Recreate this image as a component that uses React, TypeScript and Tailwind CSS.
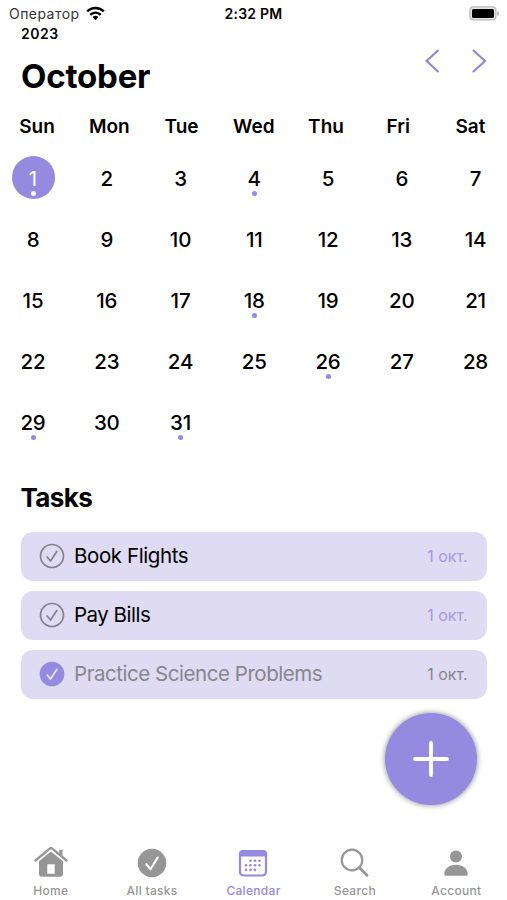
import React, { useState } from 'react';

interface Task {
  id: number;
  title: string;
  date: string;
  done: boolean;
  titleClass: string;
}

interface NavItem {
  name: string;
  icon: React.ReactNode;
}

const WEEKDAYS = ['Sun', 'Mon', 'Tue', 'Wed', 'Thu', 'Fri', 'Sat'];
const DAYS = Array.from({ length: 31 }, (_, i) => i + 1);
const DAYS_WITH_TASKS = [1, 4, 18, 26, 29, 31];

const INITIAL_TASKS: Task[] = [
  { id: 1, title: 'Book Flights', date: '1 окт.', done: false, titleClass: 'tracking-[-0.4px]' },
  { id: 2, title: 'Pay Bills', date: '1 окт.', done: false, titleClass: 'tracking-[-0.5px]' },
  { id: 3, title: 'Practice Science Problems', date: '1 окт.', done: true, titleClass: 'tracking-[-0.45px]' },
];

const NAV_ITEMS: NavItem[] = [
  {
    name: 'Home',
    icon: (
      <svg viewBox="0 0 34 32" className="w-[34px] h-8" fill="none">
        <path d="M1.500 14.500 15.600 2.600a2 2 0 0 1 2.800 0L32.500 14.500" stroke="currentColor" strokeWidth="2.300" strokeLinecap="round" />
        <path d="M25.300 3.800h3.200v7l-3.200-2.700z" fill="currentColor" />
        <path d="M5 15.300 17 5.400l12 9.900v12.500a3 3 0 0 1-3 3H8a3 3 0 0 1-3-3zM13.300 18.200v9.600h7.400v-9.600z" fill="currentColor" fillRule="evenodd" />
      </svg>
    ),
  },
  {
    name: 'All tasks',
    icon: (
      <svg viewBox="0 0 34 32" className="w-[34px] h-8" fill="none">
        <circle cx="17" cy="17" r="14.300" fill="currentColor" />
        <path d="m11.300 18.200 4.200 5 7.200-11.700" stroke="white" strokeWidth="2.100" strokeLinecap="round" strokeLinejoin="round" />
      </svg>
    ),
  },
  {
    name: 'Calendar',
    icon: (
      <svg viewBox="0 0 34 32" className="w-[34px] h-8" fill="none">
        <rect x="4" y="5.200" width="26" height="24.300" rx="3.500" stroke="currentColor" strokeWidth="2.200" />
        <path d="M2.900 10.500V8a4 4 0 0 1 4-4h20.200a4 4 0 0 1 4 4v2.500z" fill="currentColor" />
        <g fill="currentColor">
          <circle cx="14.500" cy="14.700" r="1.300" />
          <circle cx="19" cy="14.700" r="1.300" />
          <circle cx="23.500" cy="14.700" r="1.300" />
          <circle cx="10" cy="19.300" r="1.300" />
          <circle cx="14.500" cy="19.300" r="1.300" />
          <circle cx="19" cy="19.300" r="1.300" />
          <circle cx="23.500" cy="19.300" r="1.300" />
          <circle cx="10" cy="23.900" r="1.300" />
          <circle cx="14.500" cy="23.900" r="1.300" />
          <circle cx="19" cy="23.900" r="1.300" />
        </g>
      </svg>
    ),
  },
  {
    name: 'Search',
    icon: (
      <svg viewBox="0 0 34 32" className="w-[34px] h-8" fill="none" stroke="currentColor" strokeLinecap="round">
        <circle cx="14" cy="14" r="10.300" strokeWidth="2.200" />
        <path d="m21.600 21.800 7.400 7.400" strokeWidth="2.900" />
      </svg>
    ),
  },
  {
    name: 'Account',
    icon: (
      <svg viewBox="0 0 34 32" className="w-[34px] h-8" fill="currentColor">
        <circle cx="17" cy="10.400" r="6" />
        <path d="M5.300 28.200c0-5.500 4.700-9.400 11.700-9.400s11.700 3.900 11.700 9.400c0 .9-.6 1.500-1.600 1.500H6.900c-1 0-1.600-.6-1.600-1.500z" />
      </svg>
    ),
  },
];

function StatusBar() {
  return (
    <div className="h-[27px] px-[9px] grid grid-cols-3 items-center text-[14px] leading-none">
      <div className="flex items-center gap-[6px]">
        <span className="text-[#333] text-[14px] tracking-[0.45px]">Оператор</span>
        <svg viewBox="0 0 20 15" className="w-[19px] h-[15px]" fill="none" stroke="black" strokeWidth="2.500">
          <path d="M1.200 5.300a12.500 12.500 0 0 1 17.600 0" />
          <path d="M4.500 8.900a7.800 7.800 0 0 1 11 0" />
          <path d="M10 14.500 6.900 11.300a4.400 4.400 0 0 1 6.200 0z" fill="black" stroke="none" />
        </svg>
      </div>
      <span className="text-center font-semibold tracking-[0.25px]">2:32 PM</span>
      <div className="-mr-[2px] flex justify-end">
        <svg viewBox="0 0 31 15" className="w-[31px] h-[15px]">
          <rect x="0.900" y="0.900" width="26" height="13" rx="3.500" fill="#e4e4e2" stroke="#b9b9b7" strokeWidth="1.200" />
          <rect x="3" y="3" width="22" height="9" rx="1.500" fill="black" />
          <path d="M28.300 5.200c2.200.6 2.200 4 0 4.600z" fill="#aaa" />
        </svg>
      </div>
    </div>
  );
}

function CheckIcon({ done }: { done: boolean }) {
  return (
    <svg viewBox="0 0 26 26" className={`w-[26px] h-[26px] shrink-0 ${done ? 'text-[#958ae0]' : 'text-[#85828f]'}`} fill="none">
      <circle cx="13" cy="13" r="11.500" stroke="currentColor" strokeWidth="1.700" fill={done ? 'currentColor' : 'none'} />
      <path
        d="m8.200 14 3.300 4 6.300-9.500"
        stroke={done ? '#e9e6fa' : 'currentColor'}
        strokeWidth="1.700"
        strokeLinecap="round"
        strokeLinejoin="round"
      />
    </svg>
  );
}

export default function App() {
  const [selectedDay, setSelectedDay] = useState(1);
  const [activeTab, setActiveTab] = useState('Calendar');
  const [tasks, setTasks] = useState(INITIAL_TASKS);

  const toggleTask = (id: number) => {
    setTasks(tasks.map((t) => (t.id === id ? { ...t, done: !t.done } : t)));
  };

  return (
    <div className="w-[507px] h-[900px] bg-white text-black overflow-hidden flex flex-col font-['Inter',sans-serif]">
      <StatusBar />

      {/* Month header */}
      <header className="h-[80px] pl-[21px] pr-[19px] flex justify-between">
        <div>
          <div className="text-[14px] leading-[14px] font-semibold tracking-[0.5px]">2023</div>
          <h1 className="mt-[15px] text-[33px] leading-10 font-bold tracking-[-0.2px]">October</h1>
        </div>
        <div className="pt-[21px] flex gap-[30px] items-start text-[#8f84de]">
          <button type="button" aria-label="Previous month">
            <svg viewBox="0 0 17 26" className="w-[17px] h-[26px]" fill="none" stroke="currentColor" strokeWidth="2.100" strokeLinecap="round">
              <path d="M14 2.500 2.500 13 14 23.500" />
            </svg>
          </button>
          <button type="button" aria-label="Next month">
            <svg viewBox="0 0 17 26" className="w-[17px] h-[26px]" fill="none" stroke="currentColor" strokeWidth="2.100" strokeLinecap="round">
              <path d="M2.500 2.500 14 13 2.500 23.500" />
            </svg>
          </button>
        </div>
      </header>

      {/* Weekday names */}
      <div className="h-[40px] pl-[15.500px] pr-[15px] grid grid-cols-[repeat(7,43px)] justify-between items-center text-[19px] font-semibold">
        {WEEKDAYS.map((d) => (
          <span key={d} className="flex justify-center">{d}</span>
        ))}
      </div>

      {/* Days */}
      <div className="pt-[9px] pl-[11.500px] pr-[10px] grid grid-cols-[repeat(7,43px)] auto-rows-[43px] gap-y-[18px] justify-between">
        {DAYS.map((day) => (
          <button
            key={day}
            type="button"
            onClick={() => setSelectedDay(day)}
            className={`rounded-full flex flex-col items-center pt-[11px] text-[20.500px] leading-6 ${
              selectedDay === day ? 'bg-[#958ae0] text-white' : 'font-medium tracking-[-0.2px]'
            }`}
          >
            <span>{day}</span>
            {DAYS_WITH_TASKS.includes(day) && (
              <span className={`w-[5px] h-[5px] rounded-full ${selectedDay === day ? 'bg-white' : 'bg-[#958ae0]'}`} />
            )}
          </button>
        ))}
      </div>

      {/* Task list */}
      <section className="pt-[39px] px-[20.500px]">
        <h2 className="text-[26px] leading-8 font-bold tracking-[-0.600px]">Tasks</h2>
        <div className="mt-[17.600px] flex flex-col gap-[10px]">
          {tasks.map((task) => (
            <div
              key={task.id}
              onClick={() => toggleTask(task.id)}
              className={`h-[49px] pl-[18px] pr-[19px] rounded-[12px] bg-[#dedbf3] flex items-center cursor-pointer ${
                task.done ? 'text-[#88858f]' : ''
              }`}
            >
              <CheckIcon done={task.done} />
              <span className={`ml-[9.500px] pt-px flex-1 text-[20.500px] ${task.titleClass}`}>{task.title}</span>
              <span className={`text-[16px] ${task.done ? '' : 'text-[#a499e3]'}`}>{task.date}</span>
            </div>
          ))}
        </div>
      </section>

      <div className="mt-[14.400px] pr-[30px] flex justify-end">
        <button
          type="button"
          aria-label="Add task"
          className="w-[92px] h-[92px] rounded-full bg-[#958ae0] flex items-center justify-center shadow-[0_0_5px_1px_rgba(0,0,0,0.35)]"
        >
          <svg viewBox="0 0 38 38" className="w-[38px] h-[38px]" stroke="white" strokeWidth="3.800" strokeLinecap="round">
            <path d="M19 3v32M3 19h32" />
          </svg>
        </button>
      </div>

      {/* Tab bar */}
      <nav className="mt-auto h-[54px] grid grid-cols-5">
        {NAV_ITEMS.map((item) => (
          <button
            key={item.name}
            type="button"
            onClick={() => setActiveTab(item.name)}
            className={`flex flex-col items-center text-[12px] leading-4 font-medium tracking-[0.3px] ${
              activeTab === item.name ? 'text-[#958ae0]' : 'text-[#969696]'
            }`}
          >
            {item.icon}
            <span className="mt-[5px]">{item.name}</span>
          </button>
        ))}
      </nav>
    </div>
  );
}
